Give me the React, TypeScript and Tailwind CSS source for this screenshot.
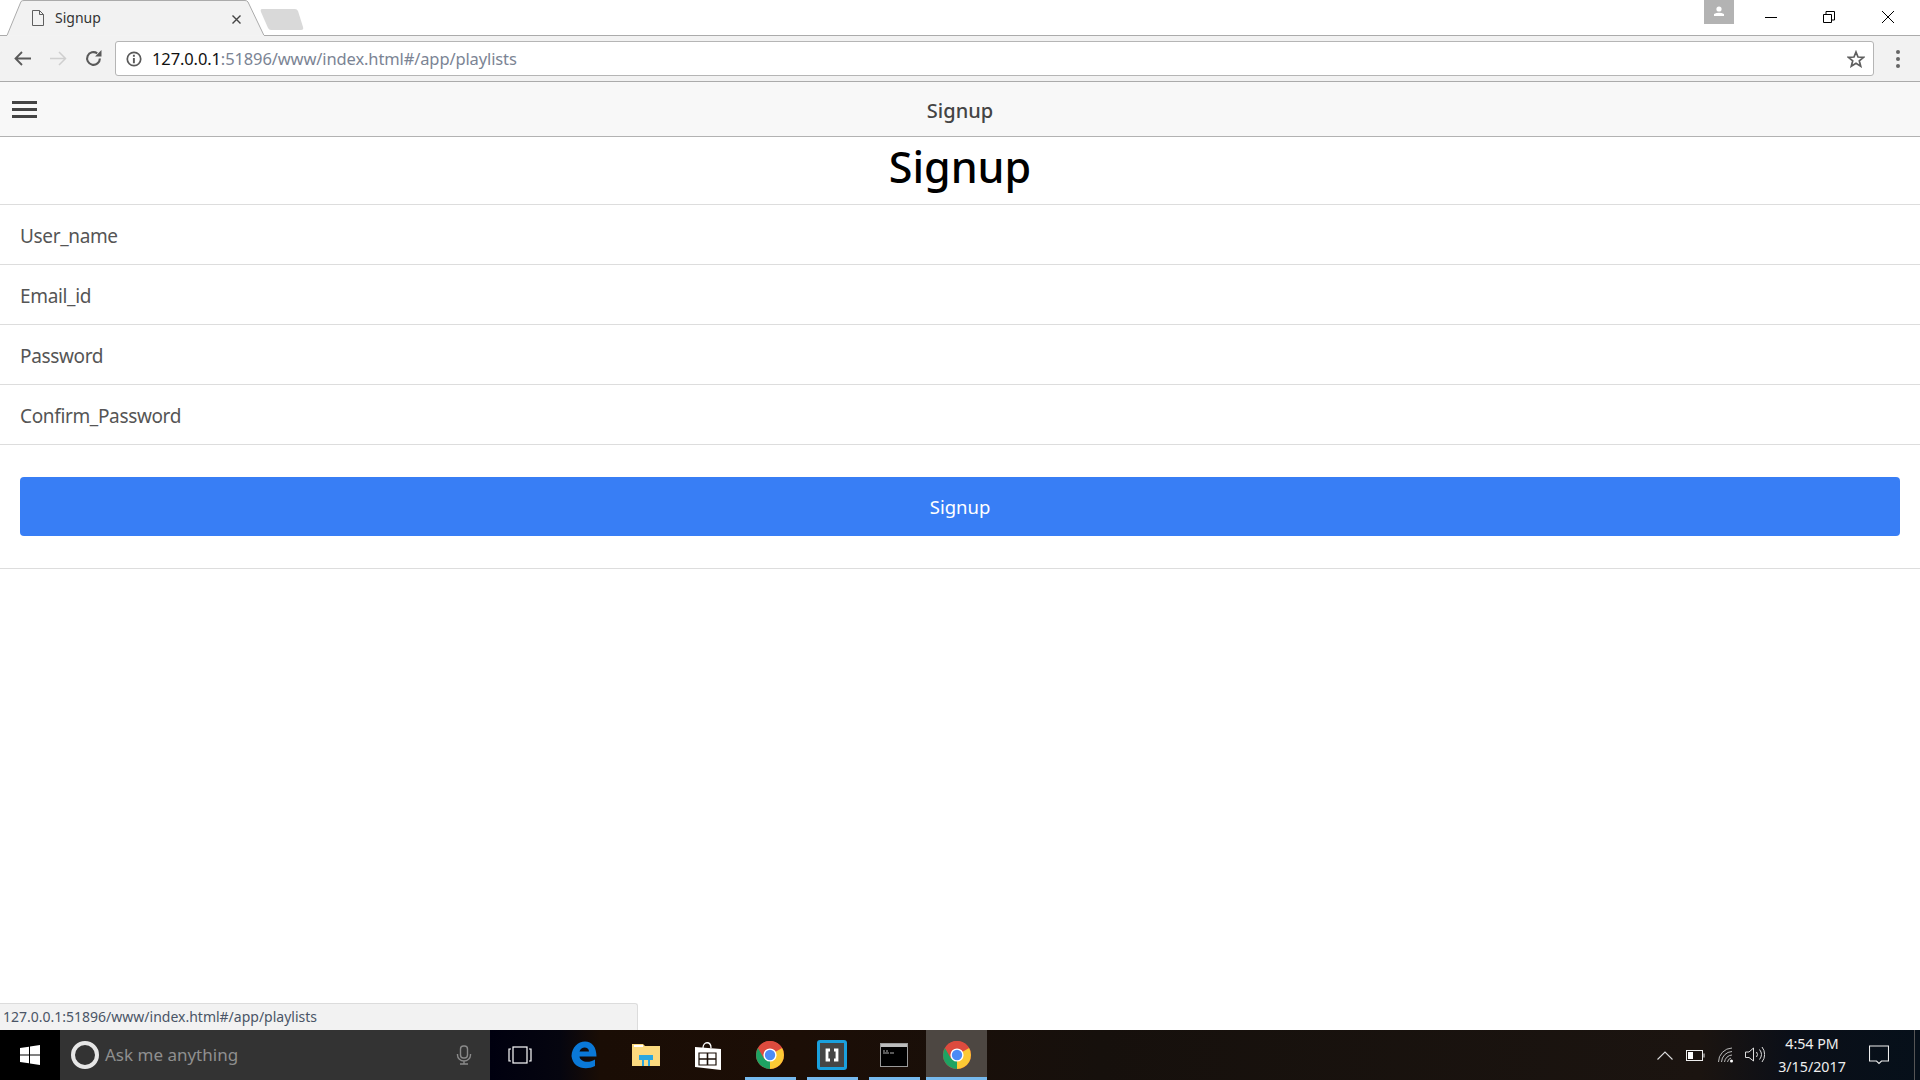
import React from "react";

const sans = "font-['Noto_Sans','Open_Sans',sans-serif]";

function Chrome() {
  return (
    <svg width="28" height="28" viewBox="0 0 28 28">
      <circle cx="14" cy="14" r="14" fill="#dd4b3e" />
      <path d="M14 14 L26.1 7 A14 14 0 0 1 14 28 Z" fill="#fcc934" />
      <path d="M14 14 L14 28 A14 14 0 0 1 1.9 7 L8 17.5 Z" fill="#1ea362" />
      <path d="M14 7 H26.1 A14 14 0 0 0 3 5.4 L8 17.5 A7 7 0 0 1 14 7Z" fill="#dd4b3e" />
      <circle cx="14" cy="14" r="6.6" fill="#fff" />
      <circle cx="14" cy="14" r="5.2" fill="#4c8bf5" />
    </svg>
  );
}

function Row({ label }: { label: string }) {
  return (
    <div className="h-[60px] border-b border-[#dddddd] flex items-center pl-5 pt-[3px] text-[19px] tracking-[-0.35px] text-[#555555]">
      {label}
    </div>
  );
}

function TabStrip() {
  return (
    <div className="relative h-9 shrink-0 bg-white flex">
      <svg className="absolute left-0 top-0" width="310" height="36" viewBox="0 0 310 36">
        <path d="M0 35.5 H7 L21 1.5 Q22 0.5 24 0.5 H245 Q247 0.5 248 2 L264 35.5 H310" fill="#f2f2f2" stroke="#ababab" />
        <path d="M7.5 36 L264 36" stroke="#f2f2f2" strokeWidth="1.5" />
        <path d="M262 9 H295 Q297 9 298 11 L303 27 Q304 30 301 30 H271 Q269 30 268 28 L261 12 Q260 9 262 9Z" fill="#d9d9d9" />
      </svg>
      <div className="absolute left-[310px] right-0 top-[35px] h-px bg-[#ababab]" />
      <div className="relative flex items-center pl-[32px] w-[264px] h-[35px]">
        <svg width="12" height="16" viewBox="0 0 12 16" fill="none" stroke="#5f5f5f" strokeWidth="1">
          <path d="M0.5 0.5 H7.5 L11.5 4.5 V15.5 H0.5Z M7.5 0.5 V4.5 H11.5" />
        </svg>
        <span className="ml-[11px] text-[14px] text-[#333] font-['Noto_Sans',sans-serif]">Signup</span>
        <svg className="absolute left-[232px] top-[15px]" width="9" height="9" viewBox="0 0 9 9" stroke="#444" strokeWidth="1.4">
          <path d="M0.5 0.5 L8.5 8.5 M8.5 0.5 L0.5 8.5" />
        </svg>
      </div>
      <div className="ml-auto flex items-start mr-[3px]">
        <div className="w-[30px] h-6 bg-[#b3b3b3] flex items-center justify-center mr-[8px]">
          <svg width="12" height="12" viewBox="0 0 12 12" fill="#fff">
            <circle cx="6" cy="3" r="2.6" />
            <path d="M1 8 Q6 5.5 11 8 V10 H1Z" />
          </svg>
        </div>
        <div className="w-[58px] h-[34px] flex items-center justify-center">
          <div className="w-3 h-px bg-black" />
        </div>
        <div className="w-[58px] h-[34px] flex items-center justify-center">
          <svg width="12" height="12" viewBox="0 0 12 12" fill="none" stroke="#000">
            <path d="M0.5 3.5 H8.5 V11.5 H0.5Z M3 3.5 V0.5 H11.5 V9 H8.5" />
          </svg>
        </div>
        <div className="w-[59px] h-[34px] flex items-center justify-center">
          <svg width="12" height="12" viewBox="0 0 12 12" stroke="#000">
            <path d="M0 0 L12 12 M12 0 L0 12" />
          </svg>
        </div>
      </div>
    </div>
  );
}

function Toolbar() {
  return (
    <div className="h-[46px] shrink-0 bg-[#f2f2f2] border-b border-[#ababab] flex items-center">
      <svg className="ml-[14px]" width="17" height="15" viewBox="0 0 17 15" fill="none" stroke="#5a5a5a" strokeWidth="1.8">
        <path d="M17 7.5 H1.5 M8 1 L1.5 7.5 L8 14" />
      </svg>
      <svg className="ml-[19px]" width="17" height="15" viewBox="0 0 17 15" fill="none" stroke="#cfcfcf" strokeWidth="1.5">
        <path d="M0 7.5 H15.5 M9 1 L15.5 7.5 L9 14" />
      </svg>
      <svg className="ml-[18px]" width="17" height="17" viewBox="0 0 16 16" fill="none">
        <path d="M14 8 A6 6 0 1 1 11.5 3.1" stroke="#5a5a5a" strokeWidth="2" />
        <path d="M9.5 6 H15.5 V0 Z" fill="#5a5a5a" />
      </svg>
      <div className="ml-[13px] w-[1759px] h-[35px] bg-white border border-[#b5b5b5] rounded-[3px] flex items-center">
        <svg className="ml-[10px]" width="16" height="16" viewBox="0 0 15 15" fill="none">
          <circle cx="7.5" cy="7.5" r="6.3" stroke="#5a5a5a" strokeWidth="1.6" />
          <path d="M6.5 6.5 H8.3 V11.5 H6.5Z M6.5 3.5 H8.3 V5.3 H6.5Z" fill="#5a5a5a" />
        </svg>
        <span className="ml-[10px] pt-[1px] text-[16.5px] font-['Noto_Sans',sans-serif] tracking-[-0.12px] whitespace-nowrap">
          <span className="text-[#111]">127.0.0.1</span>
          <span className="text-[#7b8494]">:51896/www/index.html#/app/playlists</span>
        </span>
        <svg className="ml-auto mr-[8px]" width="18" height="18" viewBox="0 0 18 18" fill="none" stroke="#5f5f5f" strokeWidth="1.7">
          <path d="M9 2 L11 7 L16.6 7.3 L12.3 10.8 L13.7 16.2 L9 13.2 L4.3 16.2 L5.7 10.8 L1.4 7.3 L7 7Z" />
        </svg>
      </div>
      <div className="ml-[22px] flex flex-col gap-[3px]">
        <div className="w-1 h-1 rounded-full bg-[#666]" />
        <div className="w-1 h-1 rounded-full bg-[#666]" />
        <div className="w-1 h-1 rounded-full bg-[#666]" />
      </div>
    </div>
  );
}

function Taskbar() {
  return (
    <div className="h-[50px] shrink-0 flex items-stretch text-white bg-[linear-gradient(90deg,#00000f_490px,#05050f_560px,#1a0d05_600px,#1c0e06_800px,#16100c_1100px,#1b1410_1700px,#0b0f18_1790px,#06101a_1920px)]">
      <div className="w-[60px] bg-black flex items-center justify-center">
        <svg width="20" height="20" viewBox="0 0 20 20" fill="#fff">
          <path d="M0 3 L9 1.7 V9.5 H0Z M10 1.5 L20 0 V9.5 H10Z M0 10.5 H9 V18.3 L0 17Z M10 10.5 H20 V20 L10 18.5Z" />
        </svg>
      </div>
      <div className="w-[430px] bg-[#333333] flex items-center pl-[11px] pr-[18px]">
        <div className="w-7 h-7 rounded-full border-[4px] border-[#e6e6e6]" />
        <span className="ml-[6px] text-[17px] text-[#8f8f8f] font-['Noto_Sans',sans-serif]">Ask me anything</span>
        <svg className="ml-auto" width="16" height="20" viewBox="0 0 16 20" fill="none" stroke="#8a8a8a" strokeWidth="1.4">
          <rect x="4.5" y="1" width="7" height="12" rx="3" />
          <path d="M1.5 9 V10 A6.5 6 0 0 0 14.5 10 V9 M8 16 V19 M4 19 H12" />
        </svg>
      </div>
      <div className="w-[63px] flex items-center pl-[18px]">
        <svg width="24" height="18" viewBox="0 0 24 18" fill="none" stroke="#fff" strokeWidth="1.2">
          <rect x="5" y="1" width="14" height="16" />
          <path d="M3 3 H1 V15 H3 M21 3 H23 V15 H21" />
        </svg>
      </div>
      <div className="w-[62px] flex items-center justify-center">
        <svg width="26" height="28" viewBox="0 0 26 28">
          <path d="M0.5 15 C1 6 7 0.5 14 0.5 C21 0.5 25.5 6 25.5 15.5 H8.5 C9 20.5 17 23 24 18.5 V25 C14 30 1.5 26.5 0.5 15Z M8.5 10.5 H18 C18 5.5 10 5 8.5 10.5Z" fill="#0a78d7" fillRule="evenodd" />
        </svg>
      </div>
      <div className="w-[62px] flex items-center justify-center">
        <svg width="28" height="24" viewBox="0 0 28 24">
          <path d="M0 1 H11 L13 3 H28 V23 H0Z" fill="#fbd97e" />
          <rect x="2" y="2" width="9" height="2" fill="#fff" />
          <path d="M7 12 H21 V17 H18 V23 H10 V17 H7Z" fill="#2ba7e0" />
          <rect x="12" y="17" width="4" height="6" fill="#fbd97e" />
        </svg>
      </div>
      <div className="w-[62px] flex items-center justify-center">
        <svg width="26" height="30" viewBox="0 0 26 30">
          <path d="M8 8 C8 1 16 1 16 8" fill="none" stroke="#fff" strokeWidth="1.3" />
          <path d="M0 7 L26 9 V30 L0 27Z" fill="#fff" />
          <path d="M4 13 H21 V25 H4Z" fill="none" stroke="#1a0f08" strokeWidth="1.2" />
          <path d="M12.5 13 V25 M4 19 H21" stroke="#1a0f08" strokeWidth="1.6" />
        </svg>
      </div>
      <div className="w-[62px] flex items-end justify-center relative">
        <div className="absolute top-[11px]"><Chrome /></div>
        <div className="w-[51px] h-[3px] bg-[#76b9ed]" />
      </div>
      <div className="w-[62px] flex items-end justify-center relative">
        <div className="absolute top-[10px] w-[30px] h-[30px] rounded-[3px] bg-[#1aa0dd] flex items-center justify-center">
          <svg width="24" height="24" viewBox="0 0 24 24">
            <rect width="24" height="24" fill="#454545" />
            <path d="M10 7 H7 V17 H10 M14 7 H17 V17 H14" fill="none" stroke="#fff" strokeWidth="2.8" />
          </svg>
        </div>
        <div className="w-[51px] h-[3px] bg-[#76b9ed]" />
      </div>
      <div className="w-[62px] flex items-end justify-center relative">
        <svg className="absolute top-[13px]" width="28" height="24" viewBox="0 0 28 24">
          <rect x="0.5" y="0.5" width="27" height="23" fill="#000" stroke="#9a9a9a" />
          <rect x="1" y="1" width="26" height="3" fill="#bdbdbd" />
          <path d="M3 8 H5 M6 8 H8 M3 10 H9 M10 10 H14" stroke="#b0b0b0" />
        </svg>
        <div className="w-[51px] h-[3px] bg-[#76b9ed]" />
      </div>
      <div className="ml-px w-[61px] bg-[#4d4742] flex items-end justify-center relative">
        <div className="absolute top-[11px]"><Chrome /></div>
        <div className="w-full h-[3px] bg-[#76b9ed]" />
      </div>
      <div className="ml-auto flex items-center">
        <svg width="16" height="9" viewBox="0 0 16 9" fill="none" stroke="#ddd" strokeWidth="1.1">
          <path d="M0.5 8.5 L8 1 L15.5 8.5" />
        </svg>
        <svg className="ml-[13px]" width="19" height="11" viewBox="0 0 19 11" fill="none" stroke="#eee">
          <rect x="0.5" y="0.5" width="16" height="10" />
          <rect x="2" y="2" width="5" height="7" fill="#fff" stroke="none" />
          <path d="M18 3.5 V7.5" />
        </svg>
        <svg className="ml-[13px]" width="16" height="16" viewBox="0 0 16 16" fill="none" stroke="#bbb">
          <path d="M0.5 15 A14 14 0 0 1 14 1 M3.5 15 A11 11 0 0 1 14 4.5 M6.5 15 A8 8 0 0 1 14 8 M9.5 15 A5 5 0 0 1 13 11" />
          <circle cx="13.5" cy="14" r="1.5" fill="#fff" stroke="none" />
        </svg>
        <svg className="ml-[11px]" width="20" height="18" viewBox="0 0 20 18" fill="none" stroke="#ddd">
          <path d="M0.5 6 H4 L8.5 2 V15 L4 11.5 H0.5Z M11.5 6 A4 4 0 0 1 11.5 11 M14.5 3.5 A8 8 0 0 1 14.5 13.5 M17 1 A12 12 0 0 1 17 16" />
        </svg>
        <div className="ml-[7px] w-[80px] flex flex-col items-center text-[14.25px] leading-[23px] font-['Noto_Sans',sans-serif] text-[#eeeeee]">
          <span>4:54 PM</span>
          <span>3/15/2017</span>
        </div>
        <svg className="ml-[17px] mr-[25px]" width="20" height="20" viewBox="0 0 20 20" fill="none" stroke="#eee" strokeWidth="1.1">
          <path d="M0.5 1 H19.5 V16 H12.5 L10 18.5 L7.5 16 H0.5Z" />
        </svg>
        <div className="w-px h-full bg-[#555]" />
        <div className="w-[5px]" />
      </div>
    </div>
  );
}

export default function App() {
  return (
    <div className={`h-screen w-full flex flex-col overflow-hidden bg-white ${sans}`}>
      <TabStrip />
      <Toolbar />
      <div className="h-[55px] shrink-0 bg-[#f8f8f8] border-b border-[#b2b2b2] relative flex items-center justify-center pt-[3px]">
        <div className="absolute left-3 top-[19px] w-[25px] flex flex-col gap-[4px]">
          <div className="h-[3px] bg-[#444]" />
          <div className="h-[3px] bg-[#444]" />
          <div className="h-[3px] bg-[#444]" />
        </div>
        <span className="text-[20px] font-medium text-[#444]">Signup</span>
      </div>
      <div className="flex-1 relative">
        <div className="h-[68px] border-b border-[#dddddd] flex items-center justify-center pb-[8px] text-[43px] leading-none font-medium text-black">
          Signup
        </div>
        <Row label="User_name" />
        <Row label="Email_id" />
        <Row label="Password" />
        <Row label="Confirm_Password" />
        <div className="h-[124px] border-b border-[#dddddd] px-5 pt-[32px]">
          <div className="h-[59px] rounded-[4px] bg-[#387ef5] flex items-center justify-center text-white text-[18.5px]">
            Signup
          </div>
        </div>
        <div className="absolute left-0 bottom-0 w-[638px] h-[27px] bg-[#f2f2f2] border-t border-r border-[#dcdcdc] rounded-tr-[3px] pl-[3px] text-[14px] leading-[26px] text-[#4a5566] font-['Noto_Sans',sans-serif]">
          127.0.0.1:51896/www/index.html#/app/playlists
        </div>
      </div>
      <Taskbar />
    </div>
  );
}
